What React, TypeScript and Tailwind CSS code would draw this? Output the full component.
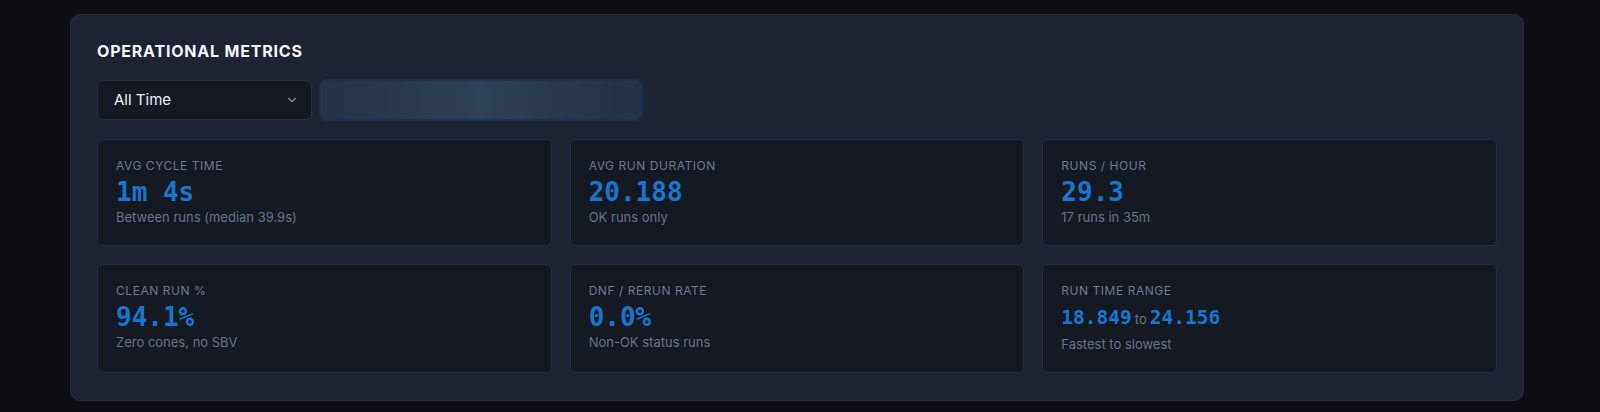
import { ChevronDown } from "lucide-react";

const metrics = [
  { label: "AVG CYCLE TIME", value: "1m 4s", sub: "Between runs (median 39.9s)" },
  { label: "AVG RUN DURATION", value: "20.188", sub: "OK runs only" },
  { label: "RUNS / HOUR", value: "29.3", sub: "17 runs in 35m" },
  { label: "CLEAN RUN %", value: "94.1%", sub: "Zero cones, no SBV" },
  { label: "DNF / RERUN RATE", value: "0.0%", sub: "Non-OK status runs" },
];

const sans = { fontFamily: "Inter, 'Noto Sans', sans-serif" };
const mono = { fontFamily: "'DejaVu Sans Mono', 'Liberation Mono', monospace" };

function Card({ label, children, sub }: { label: string; children: React.ReactNode; sub: string }) {
  return (
    <div className="bg-[#151922] border border-[#252c3b] rounded-md p-4.5">
      <div className="text-[12px] leading-4 tracking-[0.045em] text-[#6b7a8f]">{label}</div>
      <div className="mt-1">{children}</div>
      <div className="text-[13px] leading-5 text-[#677386]">{sub}</div>
    </div>
  );
}

export default function App() {
  return (
    <div style={sans} className="min-h-screen bg-[#0b0e12] pt-[14px] pl-[70px]">
      <section className="w-[1454px] rounded-[10px] border border-[#262c3c] bg-[#1e2332] px-[26px] pt-[24px] pb-[27px]">
        {/* Header */}
        <h2 className="text-[16px] leading-6 font-bold tracking-[0.05em] text-[#f4f6f9]">OPERATIONAL METRICS</h2>

        <div className="flex items-center gap-2 mt-[17px]">
          <div className="w-[215px] h-10 flex items-center justify-between pl-4 pr-3 bg-[#151922] border border-[#262d3b] rounded-md">
            <span className="text-[15px] text-[#eef1f5]">All Time</span>
            <ChevronDown size={14} strokeWidth={2} className="text-[#8494a9]" />
          </div>
          <div className="w-[322px] h-10 rounded-md border border-[#1c416b] bg-gradient-to-r from-[#243349] via-[#2d4159] to-[#233147] blur-[1px]" />
        </div>

        {/* Metric cards */}
        <div className="grid grid-cols-3 gap-4.5 mt-[19px]">
          {metrics.map(m => (
            <Card key={m.label} label={m.label} sub={m.sub}>
              <div style={mono} className="text-[26px] leading-[29px] font-bold text-[#1876d2] whitespace-pre">{m.value}</div>
            </Card>
          ))}
          <Card label="RUN TIME RANGE" sub="Fastest to slowest">
            <div className="leading-[30px] flex items-baseline gap-[3px]">
              <span style={mono} className="text-[19.5px] font-bold text-[#1876d2]">18.849</span>
              <span className="text-[13px] text-[#677386]">to</span>
              <span style={mono} className="text-[19.5px] font-bold text-[#1876d2]">24.156</span>
            </div>
          </Card>
        </div>
      </section>
    </div>
  );
}
